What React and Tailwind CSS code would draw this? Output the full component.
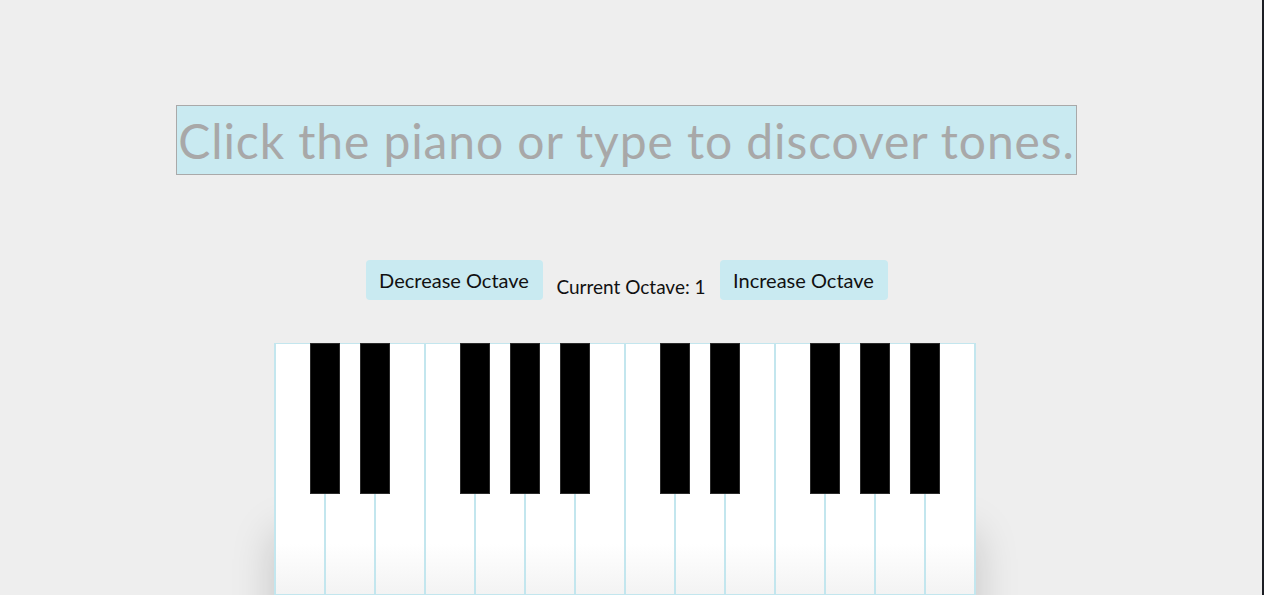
import React from "react";

const whiteCount = 14;
const blackLefts = [35, 85, 185, 235, 285, 385, 435, 535, 585, 635];

export default function App() {
  return (
    <div className="flex min-h-[595px] w-full bg-[#eeeeee] overflow-hidden" style={{ fontFamily: "Lato, 'Open Sans', sans-serif" }}>
      <div className="flex w-[1250px] shrink-0 flex-col items-center">
        <div className="mt-[105px] ml-[3px] flex h-[70px] w-[901px] items-center justify-center border border-[#a9a9a9] bg-[#c9eaf1]">
          <span className="whitespace-nowrap pt-[2px] text-[48px] leading-none text-[#a8a8a8] tracking-[0.9px]">Click the piano or type to discover tones.</span>
        </div>
        <div className="mt-[85px] ml-[3px] flex h-[40px] items-center gap-[13px]">
          <button className="flex h-[40px] w-[177px] items-center justify-center rounded-[4px] bg-[#c9eaf1] text-[20px] leading-[20px] text-[#111]">Decrease Octave</button>
          <span className="mt-[14px] w-[151px] whitespace-nowrap text-center text-[19px] leading-[20px] text-[#111]">Current Octave: 1</span>
          <button className="flex h-[40px] w-[168px] items-center justify-center rounded-[4px] bg-[#c9eaf1] text-[20px] leading-[20px] text-[#111]">Increase Octave</button>
        </div>
        <div className="relative mt-[43px] flex h-[252px] border border-[#c3e6ee] bg-white shadow-[0_190px_40px_rgba(0,0,0,0.18)]">
          {Array.from({ length: whiteCount }).map((_, i) => (
            <div key={i} className="h-full w-[50px] border-x border-[#c3e6ee] bg-gradient-to-b from-white from-80% to-[#f3f3f3]" />
          ))}
          {blackLefts.map((l) => (
            <div key={l} className="absolute top-[-1px] h-[151px] w-[30px] border border-[#2a2a2a] bg-black" style={{ left: l }} />
          ))}
        </div>
      </div>
      <div className="flex-1" />
      <div className="w-[2px] bg-[#1c1e24]" />
    </div>
  );
}
